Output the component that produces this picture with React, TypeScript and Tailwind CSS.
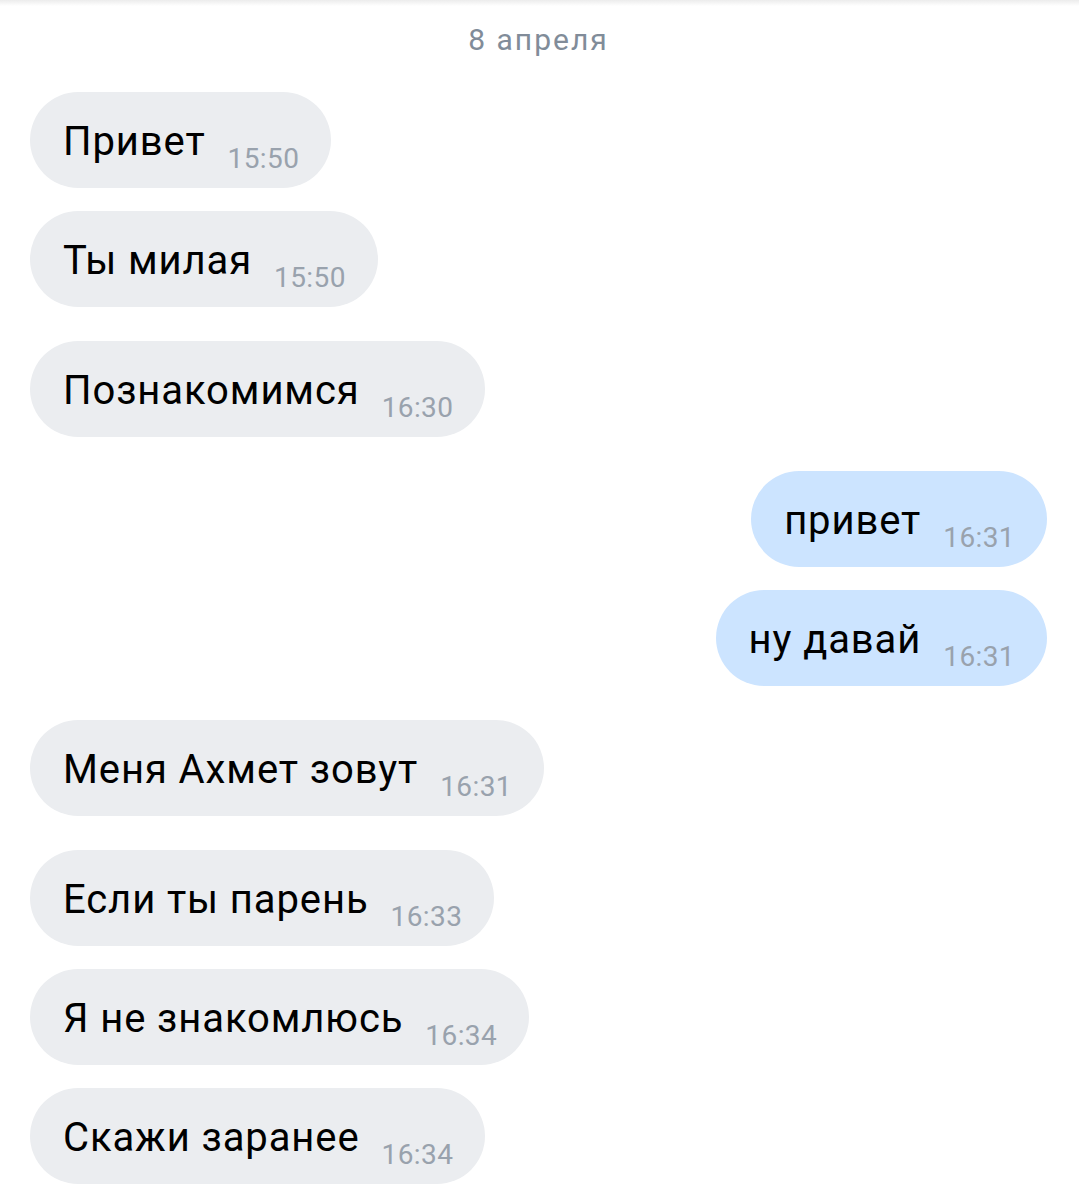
type Msg = { text: string; time: string; out?: boolean; gap: number };

const messages: Msg[] = [
  { text: 'Привет', time: '15:50', gap: 0 },
  { text: 'Ты милая', time: '15:50', gap: 23 },
  { text: 'Познакомимся', time: '16:30', gap: 34 },
  { text: 'привет', time: '16:31', out: true, gap: 34 },
  { text: 'ну давай', time: '16:31', out: true, gap: 23 },
  { text: 'Меня Ахмет зовут', time: '16:31', gap: 34 },
  { text: 'Если ты парень', time: '16:33', gap: 34 },
  { text: 'Я не знакомлюсь', time: '16:34', gap: 23 },
  { text: 'Скажи заранее', time: '16:34', gap: 23 },
];

function Bubble({ msg }: { msg: Msg }) {
  return (
    <div
      className={`flex ${msg.out ? 'justify-end' : 'justify-start'} ${
        msg.gap === 34 ? 'mt-[34px]' : msg.gap === 23 ? 'mt-[23px]' : ''
      }`}
    >
      <div
        className={`h-[96px] rounded-[48px] flex items-baseline pl-[33px] pr-[32px] pt-[26px] ${
          msg.out ? 'bg-[#cce4ff]' : 'bg-[#ebedf0]'
        }`}
      >
        <span className="text-[40px] leading-[48px] tracking-[0.9px] text-black">{msg.text}</span>
        <span className="ml-[22px] relative top-[13px] text-[28px] leading-[32px] tracking-[0.4px] text-[#99a2ad]">
          {msg.time}
        </span>
      </div>
    </div>
  );
}

export default function App() {
  return (
    <div
      className="relative w-[1079px] h-[1199px] bg-white overflow-hidden"
      style={{ fontFamily: 'Roboto, "Noto Sans", sans-serif' }}
    >
      {/* top shade */}
      <div className="absolute inset-x-0 top-0 h-[6px] bg-gradient-to-b from-[#ececec] to-white" />

      <div className="pt-[22px] pl-[30px] pr-[32px]">
        <div className="text-center text-[30px] leading-[36px] tracking-[2px] text-[#818c99]">8 апреля</div>
        <div className="mt-[34px]">
          {messages.map((m, i) => (
            <Bubble key={i} msg={m} />
          ))}
        </div>
      </div>
    </div>
  );
}
